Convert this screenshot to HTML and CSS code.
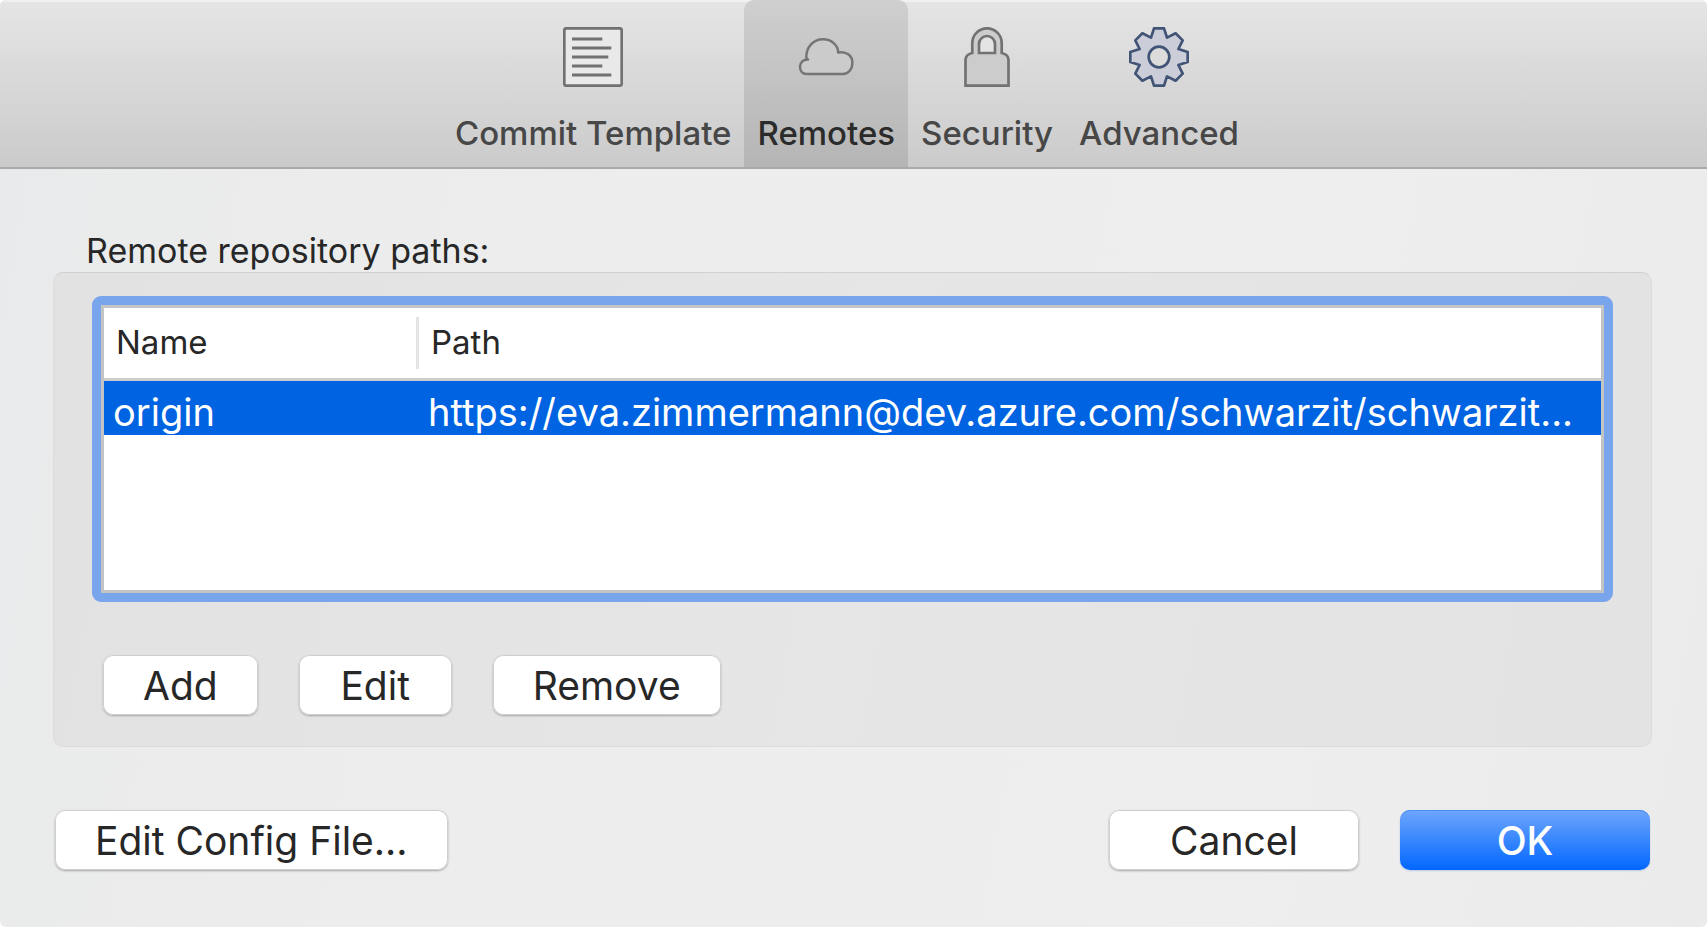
FILE: index.html
```html
<!DOCTYPE html>
<html lang="en">
<head>
<meta charset="utf-8">
<title>Repository Settings</title>
<link rel="stylesheet" href="styles.css">
</head>
<body>
<div class="window">
  <nav class="toolbar" aria-label="Settings sections">
    <button type="button" class="tab">
      <svg class="icon" viewBox="0 0 60 60" aria-hidden="true">
        <rect x="1.3" y="1.3" width="57.4" height="57.4" rx="2" fill="#e9e9e9" stroke="#717171" stroke-width="2.7"/>
        <path d="M9 12h30.300M9 21h39.300M9 30h36.300M9 39h30.300M9 48h39.300" fill="none" stroke="#717171" stroke-width="2.8"/>
      </svg>
      <span>Commit Template</span>
    </button>
    <button type="button" class="tab tab-active" aria-current="page">
      <svg class="icon" viewBox="0 0 60 60" aria-hidden="true">
        <path d="M10.500 47H47C52.500 47 56.400 42 56.400 36C56.400 29 51 24 42.200 25.500C42 18 35.500 12.300 27 12.300C17.500 12.300 9.500 20 10.400 31.500L12 32.600C7.500 32.200 4 35.500 4 39.500C4 43.800 6.500 47 10.500 47Z" fill="#cbcbcb" stroke="#757575" stroke-width="2.500" stroke-linejoin="round"/>
      </svg>
      <span>Remotes</span>
    </button>
    <button type="button" class="tab">
      <svg class="icon" viewBox="0 0 60 60" aria-hidden="true">
        <path d="M8.500 58.700V33C8.500 29.500 11 27 15.300 26V16A14.700 14.700 0 0 1 44.700 16V26C49 27 51.500 29.500 51.500 33V58.700Z" fill="#cccccc" stroke="#727272" stroke-width="2.700"/>
        <path d="M22 26V17A8 8 0 0 1 38 17V26Z" fill="#e4e4e4" stroke="#727272" stroke-width="2.700"/>
      </svg>
      <span>Security</span>
    </button>
    <button type="button" class="tab">
      <svg class="icon" viewBox="-30 -30 60 60" aria-hidden="true">
        <path d="M-5-28.700H5L8-19.400L16.600-23.700L23.700-16.600L19.400-8L28.700-5V5L19.400 8L23.700 16.600L16.600 23.700L8 19.400L5 28.700H-5L-8 19.400L-16.600 23.700L-23.700 16.600L-19.400 8L-28.700 5V-5L-19.400-8L-23.700-16.600L-16.600-23.700L-8-19.400Z" fill="#cbced8" stroke="#425476" stroke-width="2.700" stroke-linejoin="round"/>
        <circle r="10.300" fill="#dcdcdc" stroke="#425476" stroke-width="2.700"/>
      </svg>
      <span>Advanced</span>
    </button>
  </nav>

  <main class="content">
    <h1 class="group-title" id="paths-title">Remote repository paths:</h1>
    <section class="group" aria-labelledby="paths-title">
      <div class="list">
        <table class="remotes" aria-labelledby="paths-title">
          <thead>
            <tr><th class="col-name" scope="col">Name</th><th scope="col">Path</th></tr>
          </thead>
          <tbody>
            <tr><td>origin</td><td>https://eva.zimmermann@dev.azure.com/schwarzit/schwarzit...</td></tr>
          </tbody>
        </table>
      </div>
      <div class="actions">
        <button type="button" class="btn">Add</button>
        <button type="button" class="btn">Edit</button>
        <button type="button" class="btn">Remove</button>
      </div>
    </section>
    <footer class="footer">
      <button type="button" class="btn">Edit Config File...</button>
      <div class="confirm">
        <button type="button" class="btn btn-wide">Cancel</button>
        <button type="button" class="btn btn-wide btn-primary">OK</button>
      </div>
    </footer>
  </main>
</div>
</body>
</html>
```
FILE: styles.css
```css
* {
  box-sizing: border-box;
}

body {
  margin: 0;
  background: #ffffff;
  color: #272727;
  font-family: Inter, "Liberation Sans", sans-serif;
  font-size: 33px;
}

button {
  font: inherit;
  color: inherit;
  border: 0;
  margin: 0;
}

.window {
  min-height: 100vh;
  border-radius: 6px;
  overflow: hidden;
  background: linear-gradient(100deg, #e9eaeb 0%, #ededed 30%, #eeeeee 75%, #ebebeb 100%);
}

.toolbar {
  display: flex;
  justify-content: center;
  padding-right: 13px;
  border-bottom: 2px solid #aaaaaa;
  background: linear-gradient(#e5e5e5, #cbcbcb);
  box-shadow: inset 0 2px #f0f0f0;
}

.tab {
  display: flex;
  flex-direction: column;
  align-items: center;
  gap: 26px;
  padding: 27px 13px 14px;
  background: none;
  color: #474747;
  font-weight: 500;
  line-height: 40px;
}

.tab-active {
  border-radius: 10px 10px 0 0;
  background: linear-gradient(#cfcfcf, #b5b5b5);
  color: #2b2b2b;
}

.icon {
  width: 60px;
  height: 60px;
}

.content {
  padding: 62px 55px 56px 53px;
}

.group-title {
  margin: 0;
  padding: 0 0 1px 33px;
  font-size: 34px;
  font-weight: 400;
  line-height: 40px;
}

.group {
  padding: 23px 38px 31px;
  border: 1px solid #dcdcdc;
  border-top-color: #d0d0d0;
  border-radius: 10px;
  background: linear-gradient(100deg, #e2e2e2, #e6e6e6 50%, #e3e3e3);
}

.list {
  min-height: 306px;
  border: 9px solid #79a5ec;
  border-radius: 9px;
  background: #ffffff;
  box-shadow: inset 0 0 0 3px #c4c4c4;
  padding: 3px;
}

.remotes {
  width: 100%;
  border-collapse: collapse;
  table-layout: fixed;
}

.remotes th {
  height: 71px;
  padding: 0 12px 2px;
  border-bottom: 3px solid #cdcdcd;
  font-weight: 400;
  line-height: 40px;
  text-align: left;
}

.remotes .col-name {
  width: 315px;
  background: linear-gradient(#e4e4e4, #e4e4e4) right center / 3px 52px no-repeat;
}

.remotes td {
  height: 55px;
  padding: 8px 0 0 9px;
  background: #0063e1;
  color: #ffffff;
  font-size: 38px;
  line-height: 46px;
  white-space: nowrap;
  overflow: hidden;
  text-overflow: ellipsis;
}

.actions {
  display: flex;
  gap: 41px;
  padding: 53px 11px 0;
}

.btn {
  height: 60px;
  min-width: 153px;
  padding: 2px 40px 0;
  border-radius: 10px;
  background: #ffffff;
  box-shadow: inset 0 0 0 1px #cfcfcf, 0 1px 2px #a4a4a4;
  font-size: 39px;
  line-height: 58px;
}

.btn-wide {
  min-width: 250px;
}

.btn-primary {
  background: linear-gradient(#6ea6fc, #0267ff);
  box-shadow: inset 0 1px #4a8cf0, 0 1px 2px #bccbe4;
  color: #ffffff;
  font-weight: 500;
}

.footer {
  display: flex;
  justify-content: space-between;
  padding: 63px 2px 0;
}

.confirm {
  display: flex;
  gap: 41px;
}
```
